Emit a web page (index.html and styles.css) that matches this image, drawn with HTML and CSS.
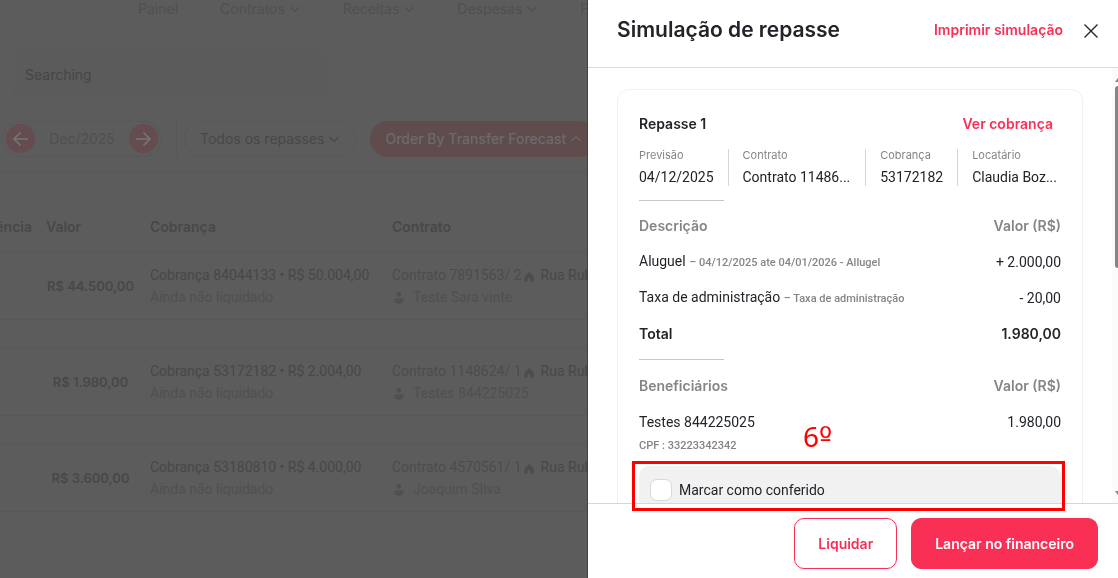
FILE: index.html
```html
<!DOCTYPE html>
<html lang="pt-BR">
<head>
<meta charset="utf-8">
<meta name="viewport" content="width=device-width, initial-scale=1">
<title>Simulação de repasse</title>
<link rel="stylesheet" href="styles.css">
</head>
<body>
<svg class="defs" aria-hidden="true">
  <symbol id="chevron" viewBox="0 0 12 12"><path d="M1.5 4 6 8.5 10.500 4" fill="none" stroke="currentColor" stroke-width="1.2"/></symbol>
  <symbol id="house" viewBox="0 0 10 10"><path d="M5 .3.7 4.200Q.4 4.500.4 5V9Q.4 9.700 1 9.700H3.500V7Q3.500 5.500 5 5.500T6.500 7V9.700H9Q9.600 9.700 9.600 9V5Q9.600 4.500 9.300 4.200Z" fill="currentColor"/></symbol>
  <symbol id="person" viewBox="0 0 10 12"><circle cx="5" cy="2.500" r="2.400" fill="currentColor"/><path d="M.5 6.500H9.500V8Q9.500 11.700 5 11.700T.5 8Z" fill="currentColor"/></symbol>
  <symbol id="arrow" viewBox="0 0 18 18"><path d="M2 9H16M9.500 2.500 16 9 9.500 15.500" fill="none" stroke="currentColor" stroke-width="1.600"/></symbol>
</svg>

<div class="page">
  <nav class="nav">
    <a href="#">Painel</a>
    <a href="#">Contratos <svg class="chevron"><use href="#chevron"/></svg></a>
    <a href="#">Receitas <svg class="chevron"><use href="#chevron"/></svg></a>
    <a href="#">Despesas <svg class="chevron"><use href="#chevron"/></svg></a>
    <a href="#">Financeiro</a>
  </nav>
  <input class="search" type="text" placeholder="Searching" aria-label="Searching">
  <div class="toolbar">
    <div class="month">
      <button class="round" aria-label="Mês anterior"><svg class="back"><use href="#arrow"/></svg></button>
      <span>Dec/2025</span>
      <button class="round" aria-label="Próximo mês"><svg><use href="#arrow"/></svg></button>
    </div>
    <span class="separator"></span>
    <button class="pill">Todos os repasses <svg class="chevron"><use href="#chevron"/></svg></button>
    <button class="pill pill-active">Order By Transfer Forecast <svg class="chevron up"><use href="#chevron"/></svg></button>
  </div>
  <table class="transfers">
    <thead>
      <tr><th class="period">Competência</th><th class="value-head">Valor</th><th class="charge">Cobrança</th><th>Contrato</th></tr>
    </thead>
    <tbody>
      <tr>
        <td></td><td class="value">R$ 44.500,00</td>
        <td>Cobrança 84044133 • R$ 50.004,00<div class="muted">Ainda não liquidado</div></td>
        <td><span class="mid">Contrato 7891563/ 2</span><svg class="house"><use href="#house"/></svg>Rua Rubi<div class="muted"><svg class="person"><use href="#person"/></svg>Teste Sara vinte</div></td>
      </tr>
      <tr class="gap"><td colspan="4"></td></tr>
      <tr>
        <td></td><td class="value">R$ 1.980,00</td>
        <td>Cobrança 53172182 • R$ 2.004,00<div class="muted">Ainda não liquidado</div></td>
        <td><span class="mid">Contrato 1148624/ 1</span><svg class="house"><use href="#house"/></svg>Rua Rubi<div class="muted"><svg class="person"><use href="#person"/></svg>Testes 844225025</div></td>
      </tr>
      <tr class="gap"><td colspan="4"></td></tr>
      <tr>
        <td></td><td class="value">R$ 3.600,00</td>
        <td>Cobrança 53180810 • R$ 4.000,00<div class="muted">Ainda não liquidado</div></td>
        <td><span class="mid">Contrato 4570561/ 1</span><svg class="house"><use href="#house"/></svg>Rua Rubi<div class="muted"><svg class="person"><use href="#person"/></svg>Joaquim SIlva</div></td>
      </tr>
    </tbody>
  </table>
</div>

<aside class="drawer">
  <header class="drawer-head">
    <h1>Simulação de repasse</h1>
    <a class="link" href="#">Imprimir simulação</a>
    <button class="close" aria-label="Fechar"><svg viewBox="0 0 16 16"><path d="M1.500 1.500 14.500 14.500M14.500 1.500 1.500 14.500" fill="none" stroke="currentColor" stroke-width="1.300"/></svg></button>
  </header>
  <div class="drawer-body">
    <section class="card">
      <div class="card-head"><h2>Repasse 1</h2><a class="link" href="#">Ver cobrança</a></div>
      <dl class="facts">
        <div><dt>Previsão</dt><dd>04/12/2025</dd></div>
        <div class="fact-wide"><dt>Contrato</dt><dd>Contrato 11486...</dd></div>
        <div><dt>Cobrança</dt><dd>53172182</dd></div>
        <div><dt>Locatário</dt><dd>Claudia Boz...</dd></div>
      </dl>
      <hr>
      <table class="amounts">
        <thead><tr><th>Descrição</th><th>Valor (R$)</th></tr></thead>
        <tbody>
          <tr><td>Aluguel <small>– 04/12/2025 ate 04/01/2026 - Allugel</small></td><td>+ 2.000,00</td></tr>
          <tr><td>Taxa de administração <small>– Taxa de administração</small></td><td>- 20,00</td></tr>
        </tbody>
        <tfoot><tr><td>Total</td><td>1.980,00</td></tr></tfoot>
      </table>
      <hr>
      <table class="amounts payees">
        <thead><tr><th>Beneficiários</th><th>Valor (R$)</th></tr></thead>
        <tbody><tr><td>Testes 844225025</td><td>1.980,00</td></tr></tbody>
      </table>
      <p class="document">CPF : 33223342342</p>
      <label class="check"><input type="checkbox"> Marcar como conferido</label>
    </section>
    <div class="scrollbar" aria-hidden="true">
      <svg viewBox="0 0 12 8"><path d="M8 0 12.500 7H3Z" fill="#858585"/></svg>
      <span class="thumb"></span>
      <svg viewBox="0 0 12 8"><path d="M3 0H12.500L8 7Z" fill="#858585"/></svg>
    </div>
  </div>
  <footer class="drawer-foot">
    <button class="btn">Liquidar</button>
    <button class="btn btn-primary">Lançar no financeiro</button>
  </footer>
  <div class="highlight"><span class="step">6<span class="ordinal">º</span></span></div>
</aside>
</body>
</html>
```
FILE: styles.css
```css
* { box-sizing: border-box; }
body {
  margin: 0;
  min-height: 100vh;
  overflow: hidden;
  background: #5c5c5c;
  color: #484848;
  font: 14px/22px Inter, "Open Sans", sans-serif;
}
button, input { font: inherit; color: inherit; }
button { background: none; border: 0; padding: 0; cursor: pointer; }
a { color: inherit; text-decoration: none; }
h1, h2, dl, dd, p { margin: 0; }
.defs { position: absolute; width: 0; height: 0; }

/* Dimmed list page */
.page { height: 100vh; overflow: hidden; white-space: nowrap; }
.nav { display: flex; gap: 42px; padding-left: 138px; height: 20px; line-height: 18px; color: #505050; }
.nav a { display: flex; align-items: center; gap: 4px; height: 18px; }
.chevron { width: 12px; height: 12px; flex: none; }
.up { transform: rotate(180deg); }
.search {
  display: block;
  width: 317px;
  height: 49px;
  margin: 29px 0 23px 11px;
  padding: 2px 14px 0;
  border: 0;
  border-radius: 10px;
  background: #5b5b5b;
}
.search::placeholder { color: #464646; opacity: 1; }
.toolbar { display: flex; align-items: center; height: 52px; padding: 0 0 16px 2px; border-bottom: 1px solid #575757; }
.month {
  display: flex;
  align-items: center;
  justify-content: space-between;
  width: 160px;
  height: 36px;
  padding: 0 3px;
  border: 1px solid #585858;
  border-radius: 18px;
  color: #505050;
}
.round { display: grid; place-items: center; width: 29px; height: 29px; border-radius: 50%; background: #644c4f; color: #757575; }
.round svg { width: 18px; height: 18px; }
.back { transform: rotate(180deg); }
.separator { width: 1px; height: 36px; margin: 0 7px 0 14px; background: #575757; }
.pill { display: flex; align-items: center; gap: 4px; height: 36px; padding: 0 15px; border: 1px solid #585858; border-radius: 18px; }
.pill-active { margin-left: 14px; border: 0; background: #604b4d; color: #6b6b6b; font-weight: 500; }
.transfers { table-layout: fixed; width: calc(100% + 60px); margin-left: -60px; border-spacing: 0; }
.transfers th { height: 79px; padding: 30px 0 0; text-align: left; vertical-align: top; line-height: 48px; font-weight: 600; border-bottom: 1px solid #575757; }
.transfers th.period { width: 106px; padding-right: 14px; text-align: right; }
.transfers th.value-head { width: 104px; }
.transfers th.charge { width: 242px; }
.transfers td { padding: 12px 0 11px; border-bottom: 1px solid #575757; font-family: Roboto, sans-serif; }
.transfers .value { padding-right: 15px; text-align: center; font-family: inherit; font-size: 13px; font-weight: 600; }
.transfers .gap td { height: 28px; padding: 0; }
.muted { color: #505050; }
.mid { color: #4c4c4c; }
.house { width: 10px; height: 10px; margin: 0 7px 0 2px; vertical-align: -2px; color: #4c4c4c; }
.person { width: 10px; height: 12px; margin: 0 9px 0 2px; vertical-align: -2px; }

/* Side drawer */
.drawer {
  position: fixed;
  inset: 0 0 0 auto;
  display: flex;
  flex-direction: column;
  width: 530px;
  background: #fff;
  color: #212529;
  box-shadow: -1px 0 0 #404040;
}
.drawer-head { display: flex; align-items: center; flex: none; height: 68px; padding: 0 19px 8px 29px; border-bottom: 1px solid #d9dadb; }
h1 { flex: 1; font-size: 21px; line-height: 30px; font-weight: 600; }
.link { color: #fa2f56; font-weight: 600; }
.close { display: grid; margin: 2px 0 0 20px; }
.close svg { width: 16px; height: 16px; }
.drawer-body { position: relative; flex: 1; min-height: 0; overflow: hidden; padding: 21px 35px 0 29px; }
.card { padding: 23px 21px 22px; border: 1px solid #f1f1f1; border-radius: 12px; white-space: nowrap; }
.card-head { display: flex; justify-content: space-between; padding-right: 8px; }
h2 { font-size: 14px; line-height: 22px; font-weight: 600; }
.facts { display: flex; margin: 14px 0; }
.facts > div { height: 37px; padding-right: 14px; }
.facts > div + div { padding-left: 14px; border-left: 1px solid #d5d5d5; }
.facts > div:last-child { padding-right: 4px; }
.facts .fact-wide { flex: 1; }
dt, small, .document { color: #858585; font-size: 11px; }
dt { line-height: 13px; }
dd { line-height: 30px; }
dd, .amounts td, .check { font-family: Roboto, sans-serif; }
hr { width: 85px; height: 1px; margin: 0; border: 0; background: #c6c6c6; }
.amounts { width: 100%; margin: 7px 0; border-spacing: 0; }
.amounts th, .amounts td { height: 36px; padding: 0; text-align: left; }
.amounts th { color: #858585; font-weight: 600; }
.amounts th:last-child, .amounts td:last-child { text-align: right; }
.amounts tfoot td { font-family: inherit; font-weight: 600; }
.payees { margin: 8px 0 0; }
small { font-weight: 500; }
.document { margin: -3px 0 12px; line-height: 17px; font-family: Roboto, sans-serif; font-weight: 500; }
.check { display: flex; align-items: center; gap: 7px; height: 48px; padding: 0 11px; border-radius: 10px; background: #f1f1f1; }
.check input { appearance: none; width: 22px; height: 22px; margin: 0; border: 1px solid #d8d8d8; border-radius: 7px; background: #fff; }
.scrollbar { position: absolute; inset: 0 0 0 auto; display: flex; flex-direction: column; justify-content: space-between; width: 6px; padding: 7px 0 4px; background: #fbfbfb; overflow: hidden; }
.scrollbar svg { flex: none; width: 12px; height: 8px; }
.thumb { height: 182px; margin: 3px 0 auto 3px; border-radius: 5px 0 0 5px; background: #858585; }
.drawer-foot { display: flex; flex: none; justify-content: flex-end; gap: 14px; padding: 14px 20px 9px; border-top: 1px solid #d5d6d7; }
.btn { height: 51px; padding: 0 23px; border: 1px solid #fa2f56; border-radius: 10px; color: #fa2f56; font-weight: 600; }
.btn-primary { background: #fa2f56; color: #fff; }

/* Step marker laid over the drawer */
.highlight { position: absolute; right: 53px; bottom: 67px; left: 44px; height: 50px; border: 3px solid #f00; pointer-events: none; }
.step { position: absolute; top: -48px; left: 168px; color: #f00; font: 28px/40px "Noto Sans", sans-serif; }
.ordinal { font-family: "DejaVu Sans", sans-serif; }
```
